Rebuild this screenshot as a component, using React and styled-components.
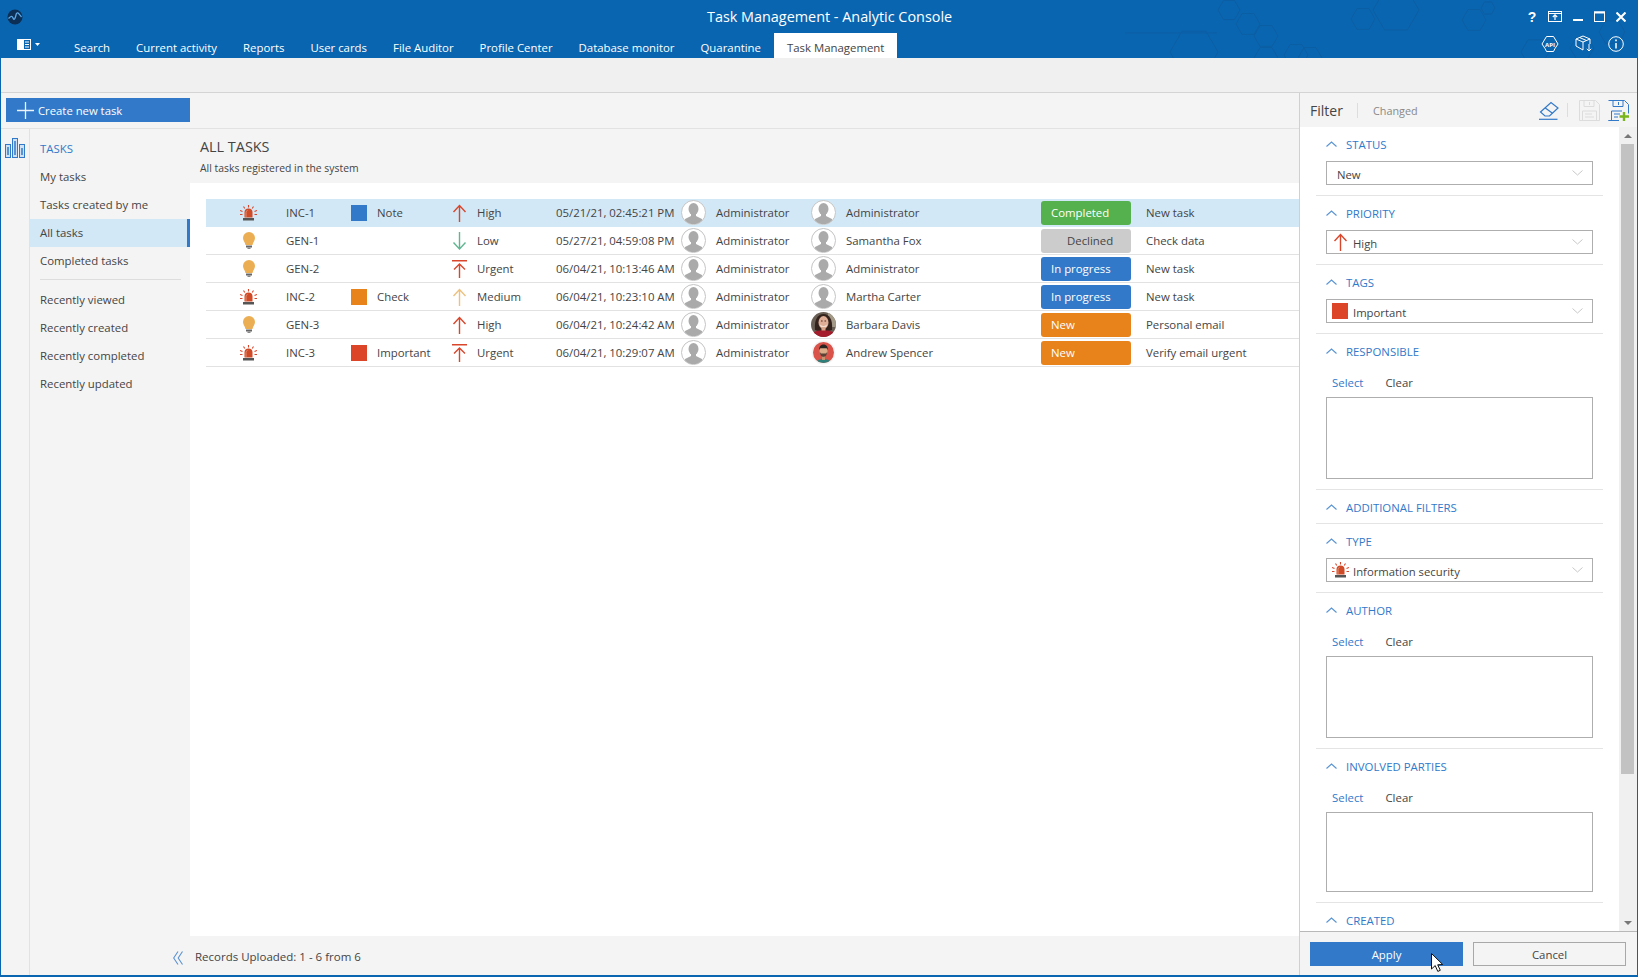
import styled, { createGlobalStyle } from "styled-components";

const GlobalStyle = createGlobalStyle`
html, body {
    margin: 0;
    padding: 0;
    background: #ffffff;
}
* {
    box-sizing: border-box;
}
`

const BLUE = "#3279c9"
const TEXT = "#444444"
const FONT_SIZE = "11.4px"

const Window = styled.div`
width: 1638px;
height: 977px;
display: flex;
flex-direction: column;
overflow: hidden;
border-left: 1px solid #0a65b0;
border-right: 1px solid #0a65b0;
border-bottom: 2px solid #0a65b0;
font-family: "Open Sans", "Noto Sans", sans-serif;
font-size: ${FONT_SIZE};
color: ${TEXT};
`

const Header = styled.header`
position: relative;
height: 58px;
flex: none;
margin-left: -1px;
margin-right: -1px;
background: #0a65b0;
color: #ffffff;
`

const Hexes = styled.svg`
position: absolute;
left: 0;
top: 0;
`

const TitleRow = styled.div`
position: relative;
height: 33px;
display: flex;
align-items: center;
justify-content: space-between;
padding: 0 12px 0 7px;
`

const Title = styled.div`
position: absolute;
left: 707px;
top: 6px;
font-size: 14.4px;
line-height: 22px;
white-space: nowrap;
`

const WindowControls = styled.div`
display: flex;
align-items: center;
gap: 11px;
`

const HelpMark = styled.span`
width: 10px;
font-family: "Liberation Sans", sans-serif;
font-weight: bold;
font-size: 14px;
line-height: 16px;
text-align: center;
`

const TabRow = styled.nav`
position: relative;
height: 25px;
display: flex;
align-items: stretch;
padding-left: 17px;
`

const MenuButton = styled.div`
width: 44px;
display: flex;
align-items: center;
gap: 4px;
padding-bottom: 2px;
`

const Tab = styled.div`
display: flex;
align-items: center;
padding: 4px 13px 0;
font-size: 11.4px;
white-space: nowrap;
color: ${props => (props.$active ? TEXT : "#ffffff")};
background: ${props => (props.$active ? "#ffffff" : "transparent")};
`

const TabIcons = styled.div`
margin-left: auto;
display: flex;
align-items: center;
gap: 16px;
padding: 0 14px 4px 0;
`

const Band = styled.div`
height: 35px;
flex: none;
background: #f0f0f0;
border-bottom: 1px solid #d4d4d4;
`

const Body = styled.div`
flex: 1;
min-height: 0;
display: flex;
`

const MainPane = styled.div`
width: 1299px;
flex: none;
display: flex;
flex-direction: column;
border-right: 1px solid #d0d0d0;
`

const ActionBar = styled.div`
height: 36px;
flex: none;
padding: 5px 0 0 5px;
background: #f4f4f4;
border-bottom: 1px solid #e2e2e2;
`

const CreateButton = styled.div`
width: 184px;
height: 24px;
display: flex;
align-items: center;
gap: 4px;
padding-left: 11px;
background: ${BLUE};
color: #ffffff;
font-size: 11.3px;
`

const Split = styled.div`
flex: 1;
min-height: 0;
display: flex;
`

const IconColumn = styled.div`
width: 29px;
flex: none;
padding: 9px 0 0 4px;
background: #f4f4f4;
border-right: 1px solid #e2e2e2;
`

const Sidebar = styled.aside`
width: 160px;
flex: none;
display: flex;
flex-direction: column;
padding-top: 6px;
background: #f4f4f4;
`

const SideHeading = styled.div`
height: 28px;
line-height: 28px;
padding-left: 10px;
color: ${BLUE};
`

const SideItem = styled.div`
height: 28px;
line-height: 28px;
padding-left: 10px;
background: ${props => (props.$active ? "#d3e8f6" : "transparent")};
border-right: 3px solid ${props => (props.$active ? BLUE : "transparent")};
`

const SideDivider = styled.div`
height: 1px;
margin: 4px 9px 6px 10px;
background: #dddddd;
`

const Collapse = styled.div`
margin-top: auto;
height: 39px;
display: flex;
align-items: center;
justify-content: flex-end;
padding: 4px 7px 0 0;
`

const Content = styled.main`
flex: 1;
min-width: 0;
display: flex;
flex-direction: column;
`

const ContentHeader = styled.div`
height: 54px;
flex: none;
padding: 7px 0 0 10px;
background: #f4f4f4;
`

const PageTitle = styled.div`
font-size: 14.4px;
line-height: 21px;
`

const PageNote = styled.div`
margin-top: 1px;
font-size: 10.4px;
line-height: 20px;
`

const TableArea = styled.div`
flex: 1;
min-height: 0;
padding: 16px 0 0 16px;
background: #ffffff;
`

const Row = styled.div`
height: 28px;
display: grid;
grid-template-columns: 80px 65px 26px 72px 28px 79px 125px 35px 95px 35px 195px 105px 1fr;
align-items: center;
white-space: nowrap;
background: ${props => (props.$selected ? "#d3e8f6" : "#ffffff")};
border-bottom: 1px solid ${props => (props.$selected ? "#d3e8f6" : "#e2e2e2")};
`

const TypeCell = styled.div`
width: 53px;
padding-left: 32px;
display: flex;
justify-content: center;
`

const TagSquare = styled.span`
display: block;
width: 16px;
height: 16px;
background: ${props => props.$color};
`

const ArrowCell = styled.div`
display: flex;
padding-left: 3px;
`

const Badge = styled.div`
width: 90px;
height: 24px;
line-height: 24px;
padding-left: ${props => (props.$declined ? 26 : 10)}px;
border-radius: 3px;
color: ${props => (props.$declined ? TEXT : "#ffffff")};
background: ${props => props.$color};
`

const Footer = styled.div`
height: 39px;
flex: none;
display: flex;
align-items: center;
padding: 2px 0 0 5px;
background: #f4f4f4;
font-size: 11.5px;
`

const FilterPane = styled.aside`
flex: 1;
min-width: 0;
display: flex;
flex-direction: column;
`

const FilterHeader = styled.div`
height: 34px;
flex: none;
display: flex;
align-items: center;
padding-left: 10px;
background: #f4f4f4;
`

const FilterTitle = styled.div`
width: 48px;
font-size: 14px;
border-right: 1px solid #dddddd;
line-height: 15px;
height: 15px;
`

const ChangedLabel = styled.div`
margin-left: 15px;
color: #888888;
font-size: 10.8px;
`

const FilterTools = styled.div`
margin-left: auto;
display: flex;
align-items: center;
padding-right: 8px;
`

const ToolDivider = styled.span`
width: 1px;
height: 14px;
margin: 0 11px 0 8px;
background: #dddddd;
`

const ToolGap = styled.span`
width: 8px;
`

const FilterBody = styled.div`
flex: 1;
min-height: 0;
display: flex;
`

const Sections = styled.div`
width: 319px;
flex: none;
overflow: hidden;
padding: 0 16px;
background: #ffffff;
`

const Section = styled.section`
padding: 5px 0 ${props => (props.$plain ? 4 : 10)}px;
border-bottom: 1px solid #e4e4e4;
`

const SectionHead = styled.div`
height: 24px;
display: flex;
align-items: center;
gap: 9px;
padding-left: 10px;
color: ${BLUE};
white-space: nowrap;
`

const SelectBox = styled.div`
height: 24px;
margin: 5px 10px 0;
display: flex;
align-items: center;
gap: ${props => props.$gap || 8}px;
padding: 0 9px 0 ${props => props.$pad || 10}px;
background: #ffffff;
border: 1px solid #aeaeae;
font-size: 11.3px;
`

const SelectLabel = styled.span`
padding-top: 2px;
`

const SelectChevron = styled.svg`
margin-left: auto;
`

const LinkRow = styled.div`
height: 20px;
margin-top: 9px;
display: flex;
align-items: center;
gap: 22px;
padding-left: 16px;
`

const SelectLink = styled.span`
color: ${BLUE};
`

const ListBox = styled.div`
height: ${props => props.$height}px;
margin: 5px 10px 0;
border: 1px solid #aeaeae;
background: #ffffff;
`

const Scrollbar = styled.div`
width: 18px;
flex: none;
display: flex;
flex-direction: column;
align-items: center;
background: #f0f0f0;
padding-right: 1px;
`

const ScrollArrow = styled.div`
height: 17px;
display: flex;
align-items: center;
justify-content: center;
flex: none;
`

const Triangle = styled.span`
width: 0;
height: 0;
border-left: 4px solid transparent;
border-right: 4px solid transparent;
border-${props => (props.$down ? "top" : "bottom")}: 4px solid #777777;
`

const ScrollThumb = styled.div`
width: 13px;
height: 630px;
background: #c2c2c2;
`

const ScrollSpace = styled.div`
flex: 1;
`

const FilterFooter = styled.div`
height: 44px;
flex: none;
display: flex;
gap: 10px;
padding: 10px 0 0 10px;
background: #f4f4f4;
border-top: 1px solid #b8b8b8;
`

const ActionButton = styled.div`
position: relative;
width: 153px;
height: 24px;
display: flex;
align-items: center;
justify-content: center;
font-size: 11.4px;
color: ${props => (props.$primary ? "#ffffff" : TEXT)};
background: ${props => (props.$primary ? BLUE : "#f4f4f4")};
border: ${props => (props.$primary ? "none" : "1px solid #a8a8a8")};
`

const Pointer = styled.svg`
position: absolute;
left: 121px;
top: 11px;
`

const hexPoints = (x, y, r) => {
    const h = r * 0.866
    return `${x - r},${y} ${x - r / 2},${y - h} ${x + r / 2},${y - h} ${x + r},${y} ${x + r / 2},${y + h} ${x - r / 2},${y + h}`
}

const HEXES = [
    [1229, 10, 11], [1248, 24, 12], [1266, 36, 12], [1194, 52, 24], [1266, 58, 12], [1296, 55, 12],
    [1363, 19, 12], [1396, 10, 23], [1474, 20, 12], [1488, 8, 7], [1535, 52, 14], [1582, 48, 12], [1612, 32, 13], [1310, 58, 12]
]

const LogoIcon = () => (
    <svg width="16" height="16" viewBox="0 0 16 16">
        <circle cx="8" cy="8" r="7.5" fill="#0b2f55" />
        <path d="M1.5 9.5 C4 7 5 6.5 6 9 S8 10.5 9 6 S12 5 14.5 8" fill="none" stroke="#5fa8e6" strokeWidth="1.3" />
    </svg>
)

const ReturnIcon = () => (
    <svg width="14" height="11" viewBox="0 0 14 11" fill="none" stroke="#fff">
        <rect x=".5" y=".5" width="13" height="10" />
        <path d="M.5 2.500h13" />
        <path d="M7 9V4M4.800 6 7 3.800 9.200 6" strokeWidth="1.2" />
    </svg>
)

const MinimizeIcon = () => (
    <svg width="10" height="12" viewBox="0 0 10 12"><rect y="8" width="10" height="2" fill="#fff" /></svg>
)

const MaximizeIcon = () => (
    <svg width="11" height="11" viewBox="0 0 11 11" fill="none" stroke="#fff">
        <rect x=".5" y="1" width="10" height="9.500" />
        <path d="M0 1.500h11" strokeWidth="2" />
    </svg>
)

const CloseIcon = () => (
    <svg width="10" height="10" viewBox="0 0 10 10" stroke="#fff" strokeWidth="2.100">
        <path d="M.5.500l9 9M9.500.500l-9 9" />
    </svg>
)

const PanelIcon = () => (
    <svg width="14" height="11" viewBox="0 0 14 11">
        <rect width="14" height="11" fill="#fff" />
        <rect x="7" y="1" width="6" height="9" fill="#0a65b0" />
        <path d="M8 3h4M8 5.500h4M8 8h4" stroke="#fff" />
    </svg>
)

const Caret = () => (
    <svg width="5" height="3" viewBox="0 0 5 3"><path d="M0 0h5L2.500 3z" fill="#fff" /></svg>
)

const ApiIcon = () => (
    <svg width="18" height="18" viewBox="0 0 18 18" fill="none" stroke="#fff">
        <path d="M5.500 1.500h7l1.500 2.500 3 5-3 4.500-1.500 3h-7L4 13.500 1 9l3-5z" />
        <text x="9" y="11.500" fill="#fff" stroke="none" fontSize="6" fontWeight="700" textAnchor="middle" fontFamily="Open Sans, sans-serif">API</text>
    </svg>
)

const PackageIcon = () => (
    <svg width="17" height="17" viewBox="0 0 17 17" fill="none" stroke="#fff">
        <path d="M1 4l7-3 7 3v5M1 4v7l7 4M1 4l7 3 7-3M8 7v8M4.500 2.500l7 3" />
        <path d="M14 9v7M11.800 13.800 14 16l2.200-2.200" />
    </svg>
)

const InfoIcon = () => (
    <svg width="16" height="16" viewBox="0 0 16 16" fill="none" stroke="#fff">
        <circle cx="8" cy="8" r="7.300" />
        <path d="M8 7v5.500" strokeWidth="1.500" />
        <path d="M8 3.500v1.800" strokeWidth="1.600" />
    </svg>
)

const PlusIcon = () => (
    <svg width="17" height="17" viewBox="0 0 17 17"><path d="M8.500 0v17M0 8.500h17" stroke="#ecf3fb" strokeWidth="1.300" /></svg>
)

const BarsIcon = () => (
    <svg width="21" height="20" viewBox="0 0 21 20" fill="none" stroke={BLUE}>
        <rect x=".5" y="6.500" width="5" height="13" fill="#cfe2f5" />
        <rect x="7.500" y=".5" width="5" height="19" fill="#cfe2f5" />
        <rect x="14.500" y="6.500" width="5" height="13" fill="#cfe2f5" />
        <path d="M3 9v8M10 3v14M17 10v7" strokeWidth="1.500" />
    </svg>
)

const AlarmIcon = () => (
    <svg width="17" height="16" viewBox="0 0 17 16">
        <path d="M4.500 12.500V7.500a4 4 0 0 1 8 0v5z" fill="#cf4a26" />
        <path d="M6 12V7.500a2 2 0 0 1 1.500-2" fill="none" stroke="#e88f73" />
        <rect x="3" y="13" width="11" height="2.500" fill="#555555" />
        <path d="M8.500 0v2.500M3.500 1.500l1.300 2M13.500 1.500l-1.300 2M0 5.500l2.500 1M17 5.500l-2.500 1M0 9.500h2.500M17 9.500h-2.500" stroke="#d9462c" strokeWidth="1.100" />
    </svg>
)

const BulbIcon = () => (
    <svg width="14" height="18" viewBox="0 0 14 18">
        <path d="M7 0a6 6 0 0 1 6 6c0 2.800-2 4-2.500 7h-7C3 10 1 8.800 1 6a6 6 0 0 1 6-6z" fill="#ecae52" />
        <rect x="4" y="13.500" width="6" height="2" fill="#666666" />
        <rect x="5.500" y="15.500" width="3" height="1.500" fill="#888888" />
    </svg>
)

const PRIORITY_PATHS = {
    High: { color: "#d9462c", d: "M7.500 2v16M1.500 8l6-6.500 6 6.500" },
    Urgent: { color: "#d9462c", d: "M0 .7h15M7.500 4v14M2 9.500l5.500-5.500 5.500 5.500" },
    Low: { color: "#62b592", d: "M7.500 0v16.500M1.500 10.500l6 6.500 6-6.500" },
    Medium: { color: "#edc17f", d: "M7.500 2v16M1.500 8l6-6.500 6 6.500" },
}

const PriorityArrow = ({ level }) => (
    <svg width="15" height="18" viewBox="0 0 15 18" fill="none" stroke={PRIORITY_PATHS[level].color} strokeWidth="1.400">
        <path d={PRIORITY_PATHS[level].d} />
    </svg>
)

const UserAvatar = () => (
    <svg width="25" height="25" viewBox="0 0 25 25">
        <clipPath id="user-clip"><circle cx="12.500" cy="12.500" r="11.500" /></clipPath>
        <circle cx="12.500" cy="12.500" r="12" fill="#ffffff" stroke="#c4c4c4" />
        <g clipPath="url(#user-clip)" fill="#aaaaaa">
            <ellipse cx="12.500" cy="9" rx="5" ry="6" />
            <path d="M10 13h5v3l6 3v6H4v-6l6-3z" />
        </g>
    </svg>
)

const BarbaraAvatar = () => (
    <svg width="25" height="25" viewBox="0 0 25 25">
        <clipPath id="barbara-clip"><circle cx="12.500" cy="12.500" r="12.500" /></clipPath>
        <g clipPath="url(#barbara-clip)">
            <rect width="25" height="25" fill="#6a5f55" />
            <rect x="17" width="8" height="15" fill="#a49a88" />
            <path d="M4 18C3 7 7 2 12.500 2S22 7 21 18l-3 1H7z" fill="#33231c" />
            <ellipse cx="12.500" cy="10.500" rx="5" ry="6.500" fill="#e0ae96" />
            <path d="M9 12.500q3.500 3 7 0l-.8 2.200h-5.400z" fill="#f8ece6" />
            <path d="M10 9h1.600M13.500 9h1.600" stroke="#4b2d22" />
            <rect x="10.500" y="15.500" width="4" height="3.500" fill="#d8a388" />
            <path d="M0 25c0-4 4-6 8-6.500h9c4 .5 8 2.500 8 6.500z" fill="#a51c2c" />
        </g>
    </svg>
)

const AndrewAvatar = () => (
    <svg width="25" height="25" viewBox="0 0 25 25">
        <clipPath id="andrew-clip"><circle cx="12.500" cy="12.500" r="10.500" /></clipPath>
        <circle cx="12.500" cy="12.500" r="12" fill="#f4f4f4" />
        <g clipPath="url(#andrew-clip)">
            <rect width="25" height="25" fill="#d9534a" />
            <path d="M5.500 24c0-4 3-5 7-5s7 1 7 5z" fill="#2f807a" />
            <rect x="11" y="15" width="3" height="5" fill="#c9926e" />
            <ellipse cx="12.500" cy="11" rx="4" ry="5" fill="#dcab88" />
            <path d="M8.800 12c.5 4 2 4.800 3.700 4.800s3.200-.8 3.700-4.800l-1.200 1.600h-5z" fill="#5a4336" />
            <path d="M8.300 10c-.5-4 2-5.500 4.200-5.500s4.700 1.500 4.200 5.500l-1-1.800h-6.400z" fill="#2a2422" />
        </g>
    </svg>
)

const Chevron = () => (
    <svg width="11" height="6" viewBox="0 0 11 6" fill="none" stroke="#5a93d3" strokeWidth="1.100">
        <path d="M.5 5.500l5-4.500 5 4.500" />
    </svg>
)

const DownChevron = () => (
    <SelectChevron width="11" height="6" viewBox="0 0 11 6" fill="none" stroke="#c8c8c8">
        <path d="M.5.500l5 4.500 5-4.500" />
    </SelectChevron>
)

const DoubleChevron = () => (
    <svg width="10" height="14" viewBox="0 0 10 14" fill="none" stroke="#5a93d3" strokeWidth="1.100">
        <path d="M5 .5L.7 7 5 13.500M9.500.5L5.200 7l4.300 6.500" />
    </svg>
)

const EraserIcon = () => (
    <svg width="20" height="19" viewBox="0 0 20 19" fill="none" stroke={BLUE} strokeWidth="1.200">
        <path d="M1.500 11L12 1.500l7 5.500-8.500 8H6z" />
        <path d="M6 6.800l7.500 5.500" />
        <path d="M0 18.300h18.500" />
    </svg>
)

const SaveIcon = () => (
    <svg width="21" height="21" viewBox="0 0 21 21" fill="none" stroke="#dcdcdc">
        <path d="M.5.500h16l4 4v16H.5z" />
        <path d="M5 .5v6h10v-6M10.500 2v3" />
        <path d="M3.500 20.500V11h14v9.500M6 14h7M6 17h9" />
    </svg>
)

const SaveAddIcon = () => (
    <svg width="21" height="21" viewBox="0 0 21 21" fill="none" stroke={BLUE}>
        <path d="M.5.500h16l4 4v9M11 20.500H.5z" />
        <path d="M5 .5v6h10v-6M10.500 2v3" />
        <path d="M3.500 20.500V11H14M6 14h6M6 17h4" />
        <path d="M16 12v9M11.500 16.500H21" stroke="#7ab51d" strokeWidth="2.400" />
    </svg>
)

const tasks = [
    { type: "alarm", id: "INC-1", tag: "Note", tagColor: "#3279c9", priority: "High", date: "05/21/21, 02:45:21 PM", resp: "Administrator", status: "Completed", statusColor: "#55b14d", title: "New task", selected: true },
    { type: "bulb", id: "GEN-1", priority: "Low", date: "05/27/21, 04:59:08 PM", resp: "Samantha Fox", status: "Declined", statusColor: "#cccccc", title: "Check data" },
    { type: "bulb", id: "GEN-2", priority: "Urgent", date: "06/04/21, 10:13:46 AM", resp: "Administrator", status: "In progress", statusColor: "#3279c9", title: "New task" },
    { type: "alarm", id: "INC-2", tag: "Check", tagColor: "#e7831a", priority: "Medium", date: "06/04/21, 10:23:10 AM", resp: "Martha Carter", status: "In progress", statusColor: "#3279c9", title: "New task" },
    { type: "bulb", id: "GEN-3", priority: "High", date: "06/04/21, 10:24:42 AM", resp: "Barbara Davis", avatar: <BarbaraAvatar />, status: "New", statusColor: "#e7831a", title: "Personal email" },
    { type: "alarm", id: "INC-3", tag: "Important", tagColor: "#dc4527", priority: "Urgent", date: "06/04/21, 10:29:07 AM", resp: "Andrew Spencer", avatar: <AndrewAvatar />, status: "New", statusColor: "#e7831a", title: "Verify email urgent" },
]

const tabs = ["Search", "Current activity", "Reports", "User cards", "File Auditor", "Profile Center", "Database monitor", "Quarantine"]

const PeopleSection = ({ label, height }) => (
    <Section>
        <SectionHead><Chevron />{label}</SectionHead>
        <LinkRow><SelectLink>Select</SelectLink><span>Clear</span></LinkRow>
        <ListBox $height={height} />
    </Section>
)

const App = () => {
    return (
        <Window>
            <GlobalStyle />
            <Header>
                <Hexes width="1638" height="58" viewBox="0 0 1638 58" fill="none" stroke="#0c5ea3">
                    {HEXES.map(([x, y, r]) => <polygon key={`${x}-${y}`} points={hexPoints(x, y, r)} />)}
                    <path d="M1125 33H1217" />
                </Hexes>
                <TitleRow>
                    <LogoIcon />
                    <Title>Task Management - Analytic Console</Title>
                    <WindowControls>
                        <HelpMark>?</HelpMark>
                        <ReturnIcon />
                        <MinimizeIcon />
                        <MaximizeIcon />
                        <CloseIcon />
                    </WindowControls>
                </TitleRow>
                <TabRow>
                    <MenuButton><PanelIcon /><Caret /></MenuButton>
                    {tabs.map((tab) => <Tab key={tab}>{tab}</Tab>)}
                    <Tab $active>Task Management</Tab>
                    <TabIcons>
                        <ApiIcon />
                        <PackageIcon />
                        <InfoIcon />
                    </TabIcons>
                </TabRow>
            </Header>
            <Band />
            <Body>
                <MainPane>
                    <ActionBar>
                        <CreateButton><PlusIcon />Create new task</CreateButton>
                    </ActionBar>
                    <Split>
                        <IconColumn><BarsIcon /></IconColumn>
                        <Sidebar>
                            <SideHeading>TASKS</SideHeading>
                            <SideItem>My tasks</SideItem>
                            <SideItem>Tasks created by me</SideItem>
                            <SideItem $active>All tasks</SideItem>
                            <SideItem>Completed tasks</SideItem>
                            <SideDivider />
                            <SideItem>Recently viewed</SideItem>
                            <SideItem>Recently created</SideItem>
                            <SideItem>Recently completed</SideItem>
                            <SideItem>Recently updated</SideItem>
                            <Collapse><DoubleChevron /></Collapse>
                        </Sidebar>
                        <Content>
                            <ContentHeader>
                                <PageTitle>ALL TASKS</PageTitle>
                                <PageNote>All tasks registered in the system</PageNote>
                            </ContentHeader>
                            <TableArea>
                                {tasks.map((task) => (
                                    <Row key={task.id} $selected={task.selected}>
                                        <TypeCell>{task.type === "alarm" ? <AlarmIcon /> : <BulbIcon />}</TypeCell>
                                        <span>{task.id}</span>
                                        {task.tag ? <TagSquare $color={task.tagColor} /> : <span />}
                                        <span>{task.tag}</span>
                                        <ArrowCell><PriorityArrow level={task.priority} /></ArrowCell>
                                        <span>{task.priority}</span>
                                        <span>{task.date}</span>
                                        <UserAvatar />
                                        <span>Administrator</span>
                                        {task.avatar || <UserAvatar />}
                                        <span>{task.resp}</span>
                                        <Badge $color={task.statusColor} $declined={task.status === "Declined"}>{task.status}</Badge>
                                        <span>{task.title}</span>
                                    </Row>
                                ))}
                            </TableArea>
                            <Footer>Records Uploaded: 1 - 6 from 6</Footer>
                        </Content>
                    </Split>
                </MainPane>
                <FilterPane>
                    <FilterHeader>
                        <FilterTitle>Filter</FilterTitle>
                        <ChangedLabel>Changed</ChangedLabel>
                        <FilterTools>
                            <EraserIcon />
                            <ToolDivider />
                            <SaveIcon />
                            <ToolGap />
                            <SaveAddIcon />
                        </FilterTools>
                    </FilterHeader>
                    <FilterBody>
                        <Sections>
                            <Section>
                                <SectionHead><Chevron />STATUS</SectionHead>
                                <SelectBox><SelectLabel>New</SelectLabel><DownChevron /></SelectBox>
                            </Section>
                            <Section>
                                <SectionHead><Chevron />PRIORITY</SectionHead>
                                <SelectBox $pad={6} $gap={5}><PriorityArrow level="High" /><SelectLabel>High</SelectLabel><DownChevron /></SelectBox>
                            </Section>
                            <Section>
                                <SectionHead><Chevron />TAGS</SectionHead>
                                <SelectBox $pad={5} $gap={5}><TagSquare $color="#dc4527" /><SelectLabel>Important</SelectLabel><DownChevron /></SelectBox>
                            </Section>
                            <PeopleSection label="RESPONSIBLE" height={82} />
                            <Section $plain>
                                <SectionHead><Chevron />ADDITIONAL FILTERS</SectionHead>
                            </Section>
                            <Section>
                                <SectionHead><Chevron />TYPE</SectionHead>
                                <SelectBox $pad={5} $gap={4}><AlarmIcon /><SelectLabel>Information security</SelectLabel><DownChevron /></SelectBox>
                            </Section>
                            <PeopleSection label="AUTHOR" height={82} />
                            <PeopleSection label="INVOLVED PARTIES" height={80} />
                            <Section>
                                <SectionHead><Chevron />CREATED</SectionHead>
                            </Section>
                        </Sections>
                        <Scrollbar>
                            <ScrollArrow><Triangle /></ScrollArrow>
                            <ScrollThumb />
                            <ScrollSpace />
                            <ScrollArrow><Triangle $down /></ScrollArrow>
                        </Scrollbar>
                    </FilterBody>
                    <FilterFooter>
                        <ActionButton $primary>
                            Apply
                            <Pointer width="12" height="19" viewBox="0 0 12 19">
                                <path d="M.5.500v15.500l3.700-3.400 2.600 5.800 2.500-1.100-2.600-5.500 5-.3z" fill="#ffffff" stroke="#111111" />
                            </Pointer>
                        </ActionButton>
                        <ActionButton>Cancel</ActionButton>
                    </FilterFooter>
                </FilterPane>
            </Body>
        </Window>
    );
}

export default App
